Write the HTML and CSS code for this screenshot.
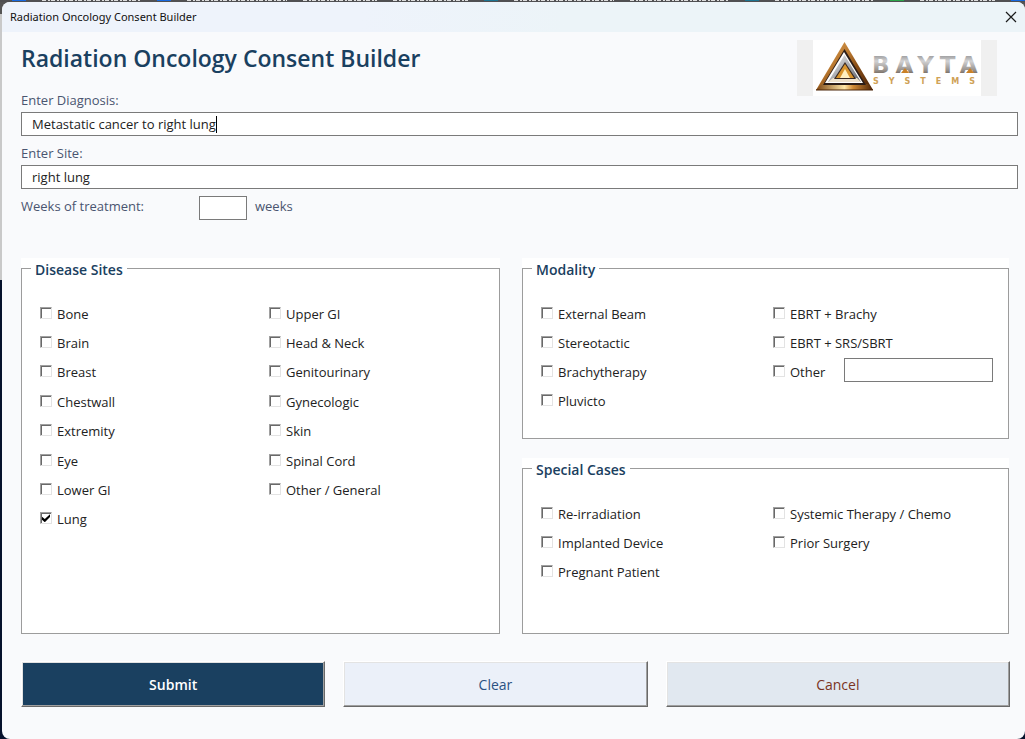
FILE: index.html
```html
<!DOCTYPE html>
<html lang="en">
<head>
<meta charset="utf-8">
<title>Radiation Oncology Consent Builder</title>
<link rel="stylesheet" href="styles.css">
</head>
<body>
<div class="desktop">
  <div class="backdrop-bar">
    <i class="bit blue"></i><i class="bit words long"></i><i class="bit blue"></i><i class="bit words long"></i><i class="bit words"></i><i class="bit words"></i><i class="bit teal"></i><i class="bit words long"></i><i class="bit words long"></i><i class="bit teal"></i><i class="bit words long"></i><i class="bit green"></i><i class="bit words"></i><i class="bit blue"></i>
  </div>
  <div class="window">
    <header class="titlebar">
      <span>Radiation Oncology Consent Builder</span>
      <button type="button" class="close" aria-label="Close">
        <svg width="12" height="12" viewBox="0 0 12 12"><path d="M1 1L11 11M11 1L1 11" stroke="#1a1a1a" stroke-width="1.2" fill="none"/></svg>
      </button>
    </header>
    <form class="form">
      <div class="head">
        <h1>Radiation Oncology Consent Builder</h1>
        <svg class="logo" width="200" height="56" viewBox="0 0 200 56" role="img" aria-label="Bayta Systems">
          <defs>
            <linearGradient id="gold" x1="0" y1="0" x2="1" y2="1">
              <stop offset="0" stop-color="#e3a85c"/><stop offset=".4" stop-color="#b9782f"/><stop offset=".6" stop-color="#8a4f17"/><stop offset="1" stop-color="#4a2207"/>
            </linearGradient>
            <linearGradient id="base" x1="0" y1="0" x2="1" y2="0">
              <stop offset="0" stop-color="#7a4310"/><stop offset=".5" stop-color="#ffe7a8"/><stop offset=".65" stop-color="#d08a35"/><stop offset="1" stop-color="#4a2105"/>
            </linearGradient>
            <linearGradient id="steel" x1="0" y1="0" x2="1" y2="1">
              <stop offset="0" stop-color="#f5f5f5"/><stop offset=".5" stop-color="#a9abb0"/><stop offset="1" stop-color="#5c5e66"/>
            </linearGradient>
            <linearGradient id="letters" x1="0" y1="0" x2="0" y2="1">
              <stop offset="0" stop-color="#7c7c7e"/><stop offset=".35" stop-color="#d2d2d3"/><stop offset=".7" stop-color="#98928d"/><stop offset="1" stop-color="#4d3c2d"/>
            </linearGradient>
          </defs>
          <path d="M0 0H200V56H0Z" fill="#f0f0f0"/>
          <path d="M16 0H184V56H16Z" fill="#fff"/>
          <path d="M47.500 2L76 50H19Z" fill="url(#gold)"/>
          <path d="M19 50L25 44H71L76 50Z" fill="url(#base)"/>
          <path d="M19 50H76" stroke="#4a2508" stroke-width="1"/>
          <path d="M47.500 9L69 45H26Z" fill="#2b1d18"/>
          <path d="M47 12L66 43H28Z" fill="#fff"/>
          <path d="M47.500 15L64 42H31Z" fill="url(#steel)"/>
          <path d="M31 42L36 38H60L64 42Z" fill="#eee2cc"/>
          <path d="M48 22L59 39H37Z" fill="#3a2a22"/>
          <path d="M48 24L57 38H39Z" fill="#d9952e"/>
          <path d="M48 29L53 38H43Z" fill="#fff0c0"/>
          <text class="logo-name" x="75" y="33" fill="url(#letters)">BAYTA</text>
          <path d="M108 28L112 33H104ZM173 28L177 33H169Z" fill="#c98128"/>
          <text class="logo-sub" x="76" y="44">SYSTEMS</text>
        </svg>
      </div>

      <label class="caption" for="diagnosis">Enter Diagnosis:</label>
      <div class="field">
        <input id="diagnosis" class="box" type="text" value="Metastatic cancer to right lung">
        <span class="caret"></span>
      </div>
      <label class="caption" for="site">Enter Site:</label>
      <div class="field"><input id="site" class="box" type="text" value="right lung"></div>
      <div class="weeks">
        <label class="weeks-label" for="weeks">Weeks of treatment:</label>
        <input id="weeks" class="box weeks-box" type="text">
        <span>weeks</span>
      </div>

      <div class="panels">
        <div class="panel tall">
          <fieldset>
            <legend>Disease Sites</legend>
            <div class="checks eight">
              <label><input type="checkbox">Bone</label>
              <label><input type="checkbox">Brain</label>
              <label><input type="checkbox">Breast</label>
              <label><input type="checkbox">Chestwall</label>
              <label><input type="checkbox">Extremity</label>
              <label><input type="checkbox">Eye</label>
              <label><input type="checkbox">Lower GI</label>
              <label><input type="checkbox" checked>Lung</label>
              <label><input type="checkbox">Upper GI</label>
              <label><input type="checkbox">Head &amp; Neck</label>
              <label><input type="checkbox">Genitourinary</label>
              <label><input type="checkbox">Gynecologic</label>
              <label><input type="checkbox">Skin</label>
              <label><input type="checkbox">Spinal Cord</label>
              <label><input type="checkbox">Other / General</label>
            </div>
          </fieldset>
        </div>
        <div class="side">
          <div class="panel modality">
            <fieldset>
              <legend>Modality</legend>
              <div class="checks four">
                <label><input type="checkbox">External Beam</label>
                <label><input type="checkbox">Stereotactic</label>
                <label><input type="checkbox">Brachytherapy</label>
                <label><input type="checkbox">Pluvicto</label>
                <label><input type="checkbox">EBRT + Brachy</label>
                <label><input type="checkbox">EBRT + SRS/SBRT</label>
                <div class="other">
                  <label><input type="checkbox">Other</label>
                  <input class="box other-box" type="text" aria-label="Other modality">
                </div>
              </div>
            </fieldset>
          </div>
          <div class="panel special">
            <fieldset>
              <legend>Special Cases</legend>
              <div class="checks three">
                <label><input type="checkbox">Re-irradiation</label>
                <label><input type="checkbox">Implanted Device</label>
                <label><input type="checkbox">Pregnant Patient</label>
                <label><input type="checkbox">Systemic Therapy / Chemo</label>
                <label><input type="checkbox">Prior Surgery</label>
              </div>
            </fieldset>
          </div>
        </div>
      </div>

      <div class="actions">
        <button type="button" class="btn submit">Submit</button>
        <button type="button" class="btn clear">Clear</button>
        <button type="button" class="btn cancel">Cancel</button>
      </div>
    </form>
  </div>
</div>
</body>
</html>
```
FILE: styles.css
```css
* { box-sizing: border-box; }

body {
  margin: 0;
  font: 13px/18px "Open Sans", "Noto Sans", sans-serif;
  color: #222;
}

.desktop {
  display: flex;
  flex-direction: column;
  min-height: 100vh;
  padding-left: 2px;
  background: linear-gradient(#555 0 14px, #c9c9c9 14px 280px, #06122c 280px);
}

.backdrop-bar {
  display: flex;
  gap: 16px;
  height: 2px;
  padding-left: 12px;
  margin-left: -2px;
  background: #505052;
  overflow: hidden;
}
.bit { flex: 0 1 14px; height: 1px; }
.words { flex: 1 1 50px; background: repeating-linear-gradient(90deg, #ddd 0 4px, #505052 4px 6px, #ddd 6px 8px, #505052 8px 9px); }
.long { flex-grow: 2; }
.blue { background: #1769e0; }
.teal { background: #1c7390; }
.green { background: #2aa64a; }

.window {
  flex: 1;
  border-radius: 8px;
  background: #f9fafc;
  overflow: hidden;
}

.titlebar {
  display: flex;
  align-items: center;
  justify-content: space-between;
  height: 30px;
  padding: 0 8px;
  background: linear-gradient(90deg, #eef3fb 0 35%, #ecf4f8 55%);
  color: #111;
  font: 11px/16px "Noto Sans", sans-serif;
}
.close {
  display: flex;
  padding: 0;
  border: 0;
  background: none;
}

.form { padding: 8px 7px 16px 19px; }

.head {
  display: flex;
  justify-content: space-between;
  height: 50px;
  padding-right: 21px;
}
h1 {
  margin: 0;
  color: #1a4060;
  font-size: 23px;
  font-weight: 600;
  line-height: 36px;
}
.logo { display: block; }
.logo-name { font: bold 23px "DejaVu Sans", sans-serif; letter-spacing: 6px; }
.logo-sub { font: bold 8px "DejaVu Sans", sans-serif; letter-spacing: 10px; fill: #cfa257; }

.caption, .weeks { color: #4a5570; }
.caption {
  display: block;
  padding: 1px 0 3px;
}

.box {
  height: 24px;
  padding: 0 10px;
  border: 1px solid #7a7a7a;
  background: #fff;
  color: #222;
  font: inherit;
  outline: 0;
}
.field {
  position: relative;
  margin-bottom: 7px;
}
.field .box {
  display: block;
  width: 100%;
}
.caret {
  position: absolute;
  top: 4px;
  left: 195px;
  width: 1px;
  height: 17px;
  background: #000;
}

.weeks {
  display: flex;
  gap: 8px;
  margin-bottom: 38px;
  line-height: 20px;
}
.weeks-label { width: 170px; }
.weeks-box { width: 48px; }

.panels {
  display: grid;
  grid-template-columns: 479fr 487fr;
  gap: 22px;
  margin-right: 9px;
}
.side {
  display: flex;
  flex-direction: column;
  justify-content: space-between;
  gap: 19px;
}
.panel {
  display: flex;
  background: #fff;
}
fieldset {
  flex: 1;
  min-width: 0;
  margin: 0;
  padding: 20px 3px 22px 18px;
  border: 1px solid #9c9c9c;
}
legend {
  margin-left: -9px;
  padding: 3px 4px 0;
  color: #1a4060;
  font-size: 14px;
  font-weight: 600;
  line-height: 18px;
}
.tall fieldset { padding-right: 1px; padding-bottom: 99px; }
.special fieldset { padding-bottom: 46px; }

.checks {
  display: grid;
  grid-auto-flow: column;
  grid-template-columns: 1fr 1fr;
}
.eight { height: 235px; grid-template-rows: repeat(8, 1fr); }
.four { height: 117px; grid-template-rows: repeat(4, 1fr); }
.three { height: 88px; grid-template-rows: repeat(3, 1fr); }
.checks label {
  display: flex;
  align-items: center;
  gap: 5px;
}
input[type="checkbox"] {
  appearance: none;
  width: 12px;
  height: 12px;
  margin: 0 0 2px;
  border: 1px solid;
  border-color: #a0a0a0 #e3e3e3 #e3e3e3 #a0a0a0;
  background: #fff;
  box-shadow: inset 1px 1px 0 #696969;
}
input[type="checkbox"]:checked::after {
  content: "";
  display: block;
  width: 8px;
  height: 8px;
  margin: 1px;
  background: #000;
  clip-path: polygon(0 30%, 35% 60%, 100% 0, 100% 35%, 35% 100%, 0 68%);
}
.other {
  display: flex;
  align-items: center;
  gap: 19px;
}
.other-box {
  width: 149px;
  margin-bottom: 5px;
}

.actions {
  display: grid;
  grid-template-columns: 304fr 304fr 344fr;
  gap: 18px;
  margin: 27px 8px 0 0;
}
.btn {
  height: 46px;
  padding: 2px 6px 0;
  border: 1px solid;
  border-color: #fff #696969 #696969 #fff;
  box-shadow: inset -1px -1px 0 #a0a0a0, inset 1px 1px 0 #e3e3e3;
  font: 14px/20px "Open Sans", sans-serif;
}
.submit { background: #1a4060; color: #fff; font-weight: 600; }
.clear { background: #ebf0f9; color: #2c5282; }
.cancel { background: #e1e8f0; color: #7b341e; }
```
